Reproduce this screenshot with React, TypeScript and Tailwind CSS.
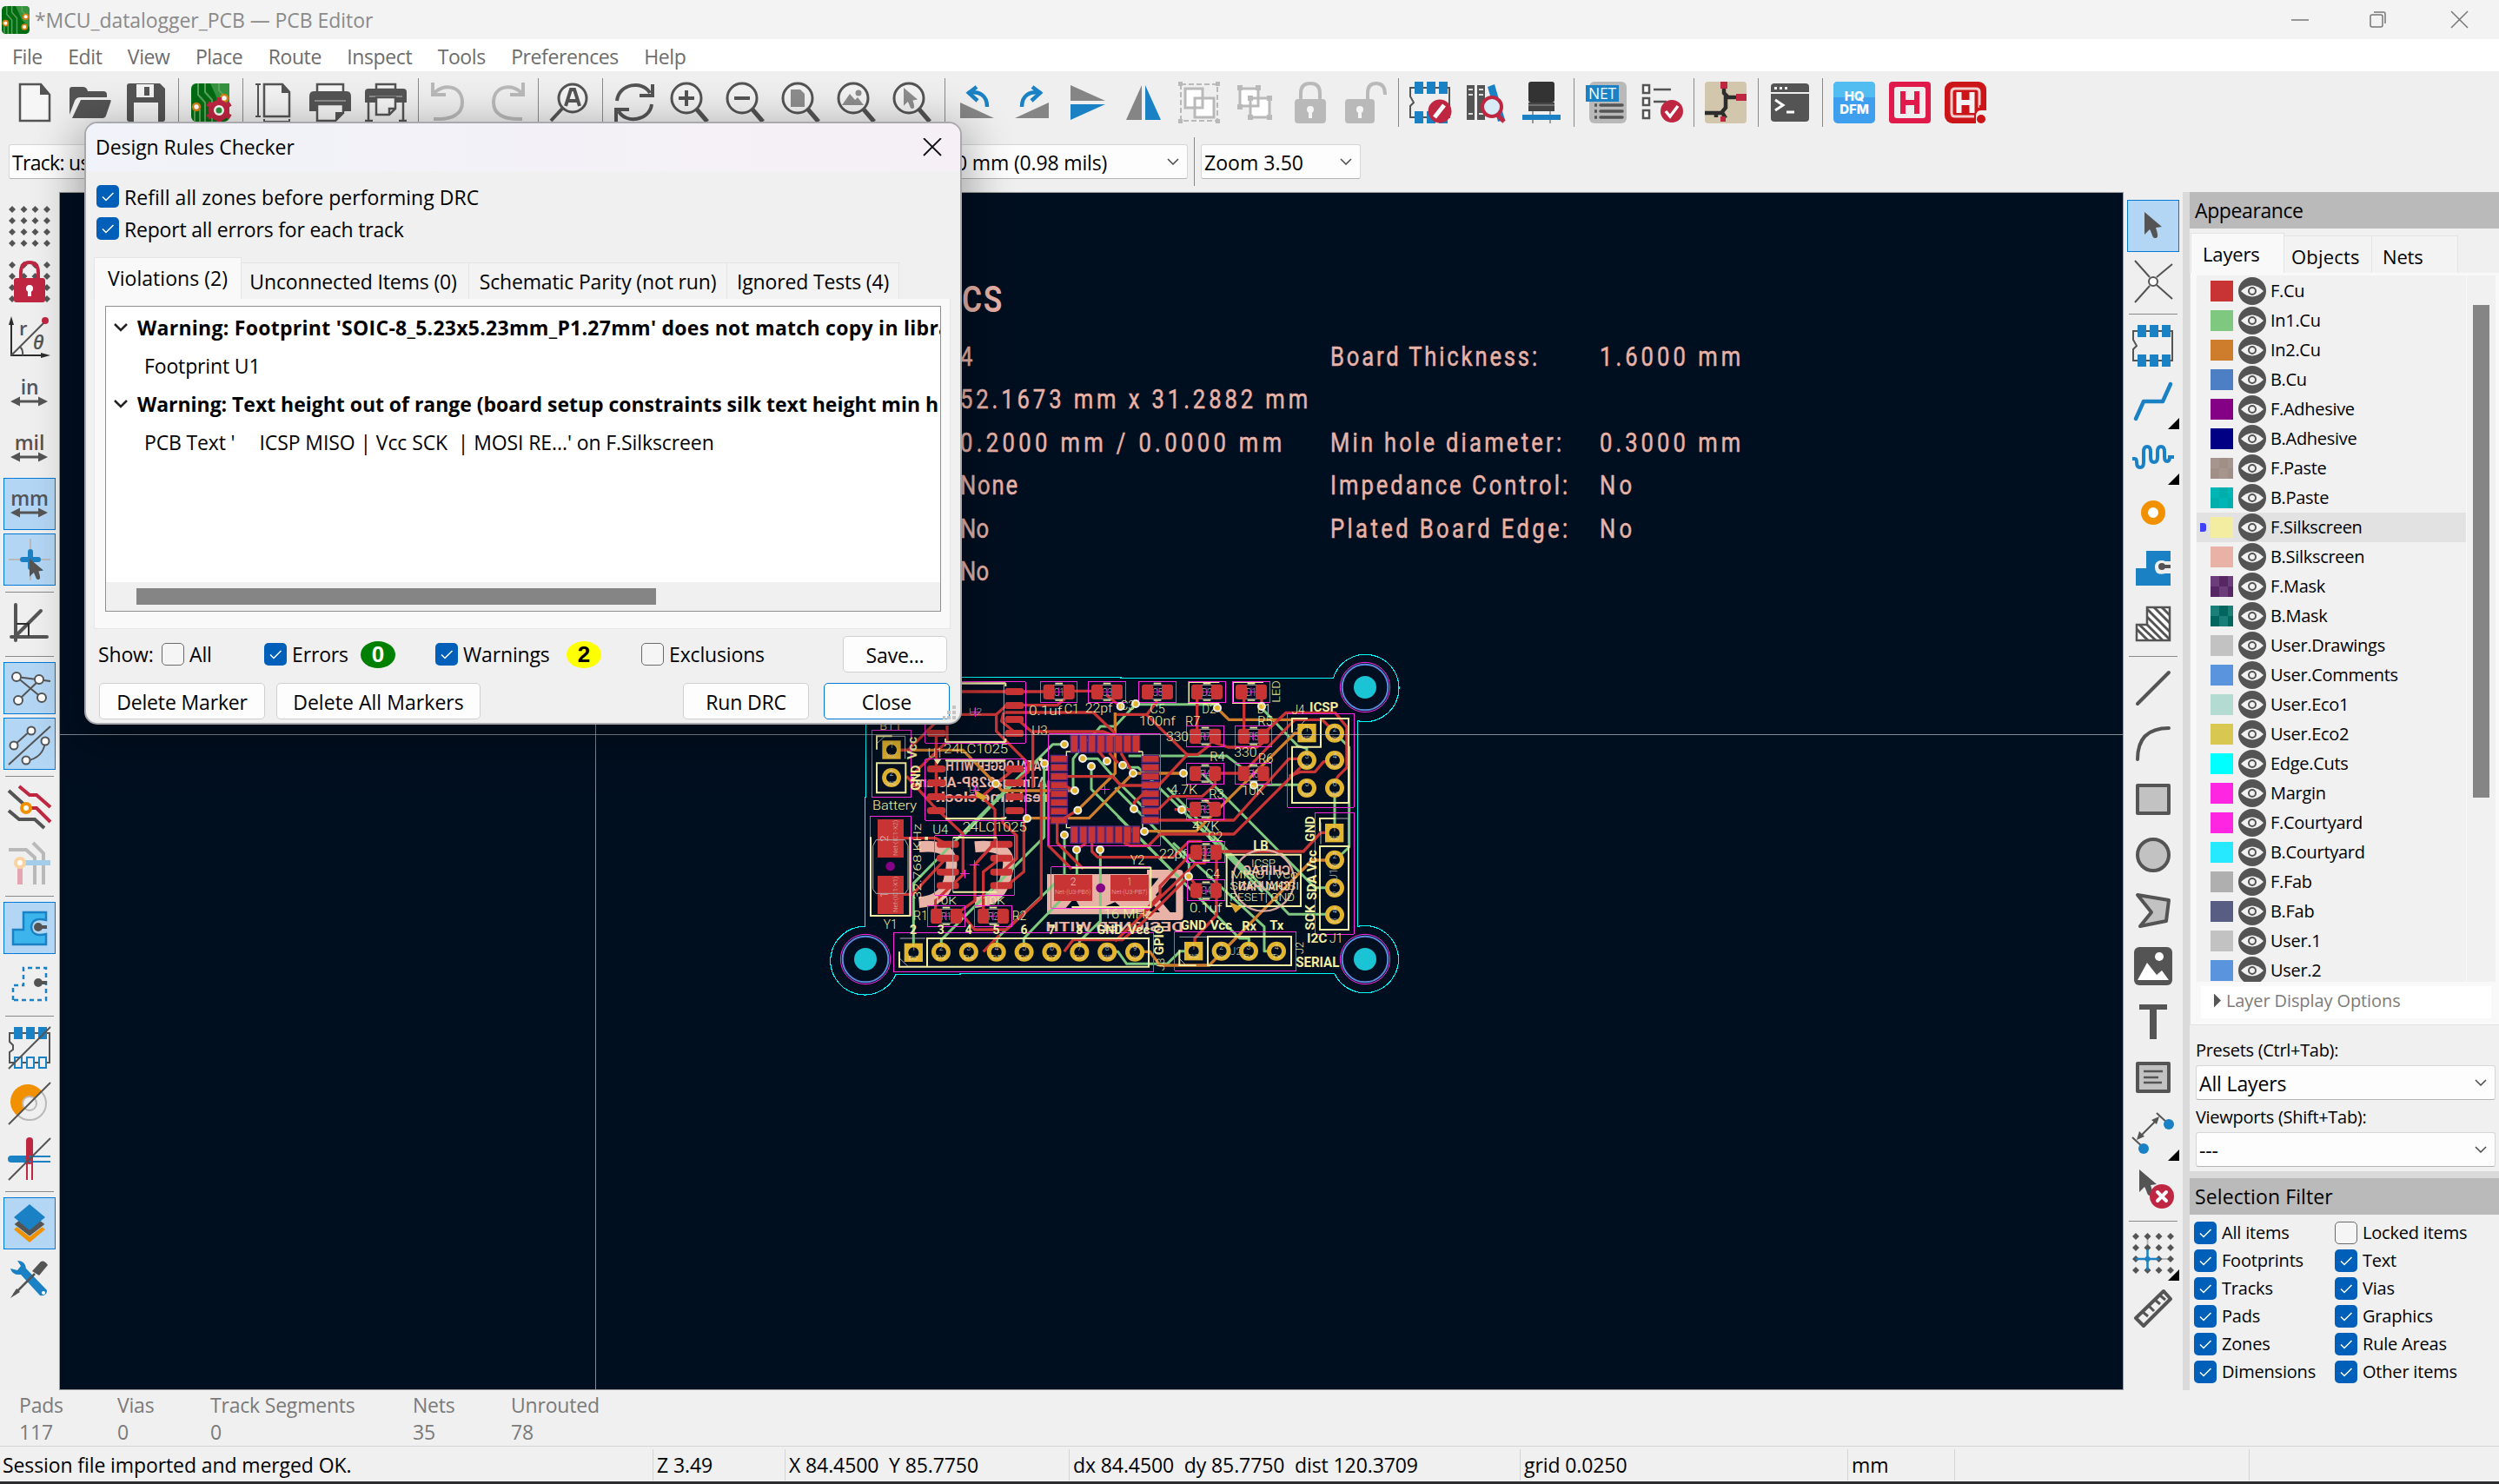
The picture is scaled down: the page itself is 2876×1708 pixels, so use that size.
import type { ReactNode } from "react";
import clsx from "clsx";

const D = "#545454";
const B = "#1a81c4";
const R = "#bf2641";
const G = "#b9b9b9";
const O = "#f29100";

/* ---------- icons, all on a 48 x 48 grid ---------- */

const lens = (
  <>
    <circle cx="27" cy="19" r="16" fill="#f5f5f5" stroke={D} strokeWidth="3" />
    <path d="M15 31 L2 45" stroke={D} strokeWidth="4" />
  </>
);
const lensR = (
  <>
    <circle cx="20" cy="19" r="17" fill="#f3f3f3" stroke={D} strokeWidth="3" />
    <path d="M32 32 L44 46" stroke={D} strokeWidth="5" />
  </>
);
const arrowPair = (
  <path d="M2 34 L13 28.500 V32.500 H34 V28.500 L45 34 L34 39.500 V35.500 H13 V39.500 Z" fill={D} />
);
const dots = [5, 18, 31, 44].map((y) =>
  [4, 17.5, 30.5, 44].map((x) => <path key={`${x}-${y}`} d={`M${x} ${y - 4} l4 4 l-4 4 l-4 -4 Z`} fill={D} />),
);
const tick = (
  <>
    <circle cx="36" cy="34" r="13" fill={R} />
    <path d="M29 34 L34 40 L43 28" fill="none" stroke="#fff" strokeWidth="3.500" />
  </>
);
const boardArt = (
  <>
    <rect x="2" y="2" width="44" height="44" rx="6" fill="#006c12" />
    <path d="M24 2 H46 V36 L34 24 Z" fill="#37933f" />
    <path
      d="M10 2 V15 L18 24 V46 M18 2 V12 L26 21 V46 M34 2 V10 L42 18 M6 34 V46 M12 32 V46"
      fill="none"
      stroke="#5aa35e"
      strokeWidth="2"
    />
    <circle cx="8" cy="29" r="4" fill="#fff" stroke="#d98014" strokeWidth="2.500" />
    <circle cx="40" cy="19" r="4" fill="#fff" stroke="#d98014" strokeWidth="2.500" />
    <circle cx="38" cy="35" r="4" fill="#fff" stroke="#d98014" strokeWidth="2.500" />
  </>
);
const undoArrow = (
  <path d="M4 1 V15 H19 M5 14 C14 2 38 3 38 24 C38 37 27 44 5 43" fill="none" stroke={G} strokeWidth="4" />
);
const rotateArrow = (
  <>
    <path d="M5 24 L44 42 H5 Z" fill="#858585" />
    <path d="M14 13 C27 10 36 16 36 29" fill="none" stroke={B} strokeWidth="4.500" />
    <path d="M24 6 L15 13 L25 22" fill="none" stroke={B} strokeWidth="4.500" />
  </>
);
const cursor = "M0 0 L0 26 L6 20 C9 25 9 30 12 30 C16 30 16 27 13 18 L20 17 Z";
const footprint = (
  <>
    <path d="M8 7 H46 V41 H1 V28 L5 24 L1 17 V7 Z" fill="none" stroke={D} strokeWidth="2" />
    <path d="M6 0 h10 v14 h-10 Z M20 0 h10 v14 h-10 Z M34 0 h10 v14 h-10 Z M6 34 h10 v14 h-10 Z M20 34 h10 v14 h-10 Z M34 34 h10 v14 h-10 Z" fill={B} />
  </>
);

const icons: Record<string, ReactNode> = {
  file: (
    <>
      <path d="M7 3 H31 L41 15 V45 H7 Z" fill="#f6f6f6" stroke={D} strokeWidth="2.500" />
      <path d="M30 2 L42 15 H30 Z" fill={D} />
    </>
  ),
  open: (
    <>
      <path d="M0 38 V9 Q0 6 3 6 H15 Q20 6 21 11 H39 Q43 11 43 15 V18 H12 Q8 18 6 22 Z" fill={D} />
      <path d="M13 21 H47 Q48 21 47.500 23 L42 39 Q41 42 38 42 H3 Z" fill={D} />
    </>
  ),
  save: (
    <>
      <path d="M5 2 H40 L46 8 V43 Q46 46 43 46 H5 Q2 46 2 43 V5 Q2 2 5 2 Z" fill={D} />
      <path d="M13 3 H33 V18 H13 Z M10 24 H38 V46 H10 Z" fill="#f3f3f3" />
      <path d="M22 6 H28 V16 H22 Z" fill={D} />
    </>
  ),
  board: (
    <>
      {boardArt}
      <circle cx="34" cy="33" r="9" fill="#fff" stroke={R} strokeWidth="6" />
      <path d="M34 18 V24 M34 42 V48 M21 25 L27 29 M41 37 L47 41 M21 41 L27 37 M41 29 L47 25" stroke={R} strokeWidth="6" />
      <circle cx="34" cy="33" r="3.500" fill="#2c9438" />
    </>
  ),
  page: (
    <>
      <path d="M12 3 H33 L41 12 V40 H12 Z" fill="#f3f3f3" stroke={D} strokeWidth="2.500" />
      <path d="M32 2 L42 13 H32 Z" fill={D} />
      <path d="M2 3 H8 M5 3 V41 M2 40 H8 M12 43 V48 M41 43 V48 M12 46 H41" stroke={D} strokeWidth="2" />
    </>
  ),
  print: (
    <>
      <path d="M9 3 H39 V13 H9 Z" fill="#f5f5f5" stroke={D} strokeWidth="2.500" />
      <path d="M5 11 H43 Q48 11 48 17 V34 H0 V17 Q0 11 5 11 Z" fill={D} />
      <path d="M6 22 H42" stroke="#8c8c8c" strokeWidth="2" />
      <path d="M9 26 H39 V36 L30 45 H9 Z" fill="#f5f5f5" stroke={D} strokeWidth="2.500" />
      <path d="M30 46 V35 H40 Z" fill={D} />
    </>
  ),
  plot: (
    <>
      <path d="M13 3 H35 V9 H13 Z" fill="#f5f5f5" stroke={D} strokeWidth="2.500" />
      <path d="M4 8 H44 Q48 8 48 12 V24 H0 V12 Q0 8 4 8 Z" fill={D} />
      <path d="M5 17 H43" stroke="#8c8c8c" strokeWidth="2" />
      <path d="M13 18 H35 V31 L28 38 H13 Z" fill="#f5f5f5" stroke={D} strokeWidth="2.500" />
      <path d="M4 24 V45 M44 24 V45 M0 45 H9 M39 45 H48 M28 38 V31 H35" stroke={D} strokeWidth="2.500" fill="none" />
    </>
  ),
  undo: undoArrow,
  redo: <g transform="matrix(-1 0 0 1 48 0)">{undoArrow}</g>,
  find: (
    <>
      {lens}
      <path d="M19 28 L25 9 H29 L35 28 M21 22 H33" fill="none" stroke={D} strokeWidth="4" />
    </>
  ),
  refresh: (
    <>
      <path d="M4 22 C6 2 34 -2 42 13 M44 26 C42 45 14 49 6 34" fill="none" stroke={D} strokeWidth="4" />
      <path d="M45 3 V16 H30 M3 46 V32 H18" fill="none" stroke={D} strokeWidth="4" />
    </>
  ),
  zoomIn: (
    <>
      {lensR}
      <path d="M11 19 H29 M20 10 V28" stroke={D} strokeWidth="4" />
    </>
  ),
  zoomOut: (
    <>
      {lensR}
      <path d="M11 19 H29" stroke={D} strokeWidth="4" />
    </>
  ),
  zoomPage: (
    <>
      {lensR}
      <path d="M12 9 H23 L28 14 V29 H12 Z" fill="#8d8d8d" />
    </>
  ),
  zoomObj: (
    <>
      {lensR}
      <path d="M7 27 L16 14 L22 21 L25 18 L32 27 Z" fill="#8d8d8d" />
      <circle cx="26" cy="13" r="3.500" fill="#8d8d8d" />
    </>
  ),
  zoomSel: (
    <>
      {lensR}
      <path d={cursor} transform="translate(14 7) scale(.8)" fill="#8d8d8d" />
    </>
  ),
  rotL: rotateArrow,
  rotR: <g transform="matrix(-1 0 0 1 48 0)">{rotateArrow}</g>,
  flipV: (
    <>
      <path d="M4 4 L44 22 H4 Z" fill="#858585" />
      <path d="M4 26 H44 L4 44 Z" fill={B} />
    </>
  ),
  flipH: (
    <>
      <path d="M22 4 V44 H4 Z" fill="#858585" />
      <path d="M26 4 V44 H44 Z" fill={B} />
    </>
  ),
  group: (
    <>
      <rect x="3" y="3" width="42" height="42" fill="none" stroke={G} strokeWidth="2" strokeDasharray="6 3" />
      <path d="M8 8 H28 V30 H8 Z M19 19 H41 V41 H19 Z" fill="#fff" stroke={G} strokeWidth="3" />
      <path d="M0 0 h5 v5 h-5 Z M43 0 h5 v5 h-5 Z M0 43 h5 v5 h-5 Z M43 43 h5 v5 h-5 Z" fill={G} />
    </>
  ),
  ungroup: (
    <>
      <path d="M7 8 H28 V28 H7 Z M19 19 H41 V41 H19 Z" fill="#fff" stroke={G} strokeWidth="3" />
      <path d="M4 4 h6 v6 h-6 Z M25 4 h6 v6 h-6 Z M4 26 h6 v6 h-6 Z M16 16 h6 v6 h-6 Z M38 16 h6 v6 h-6 Z M16 38 h6 v6 h-6 Z M38 38 h6 v6 h-6 Z" fill={G} />
    </>
  ),
  lock: (
    <>
      <path d="M13 22 V13 Q13 2 24 2 Q35 2 35 13 V22" fill="none" stroke={G} strokeWidth="4" />
      <rect x="6" y="20" width="36" height="28" rx="4" fill={G} />
      <circle cx="24" cy="32" r="4" fill="#f5f5f5" />
      <path d="M22 33 h4 v9 h-4 Z" fill="#f5f5f5" />
    </>
  ),
  unlock: (
    <>
      <path d="M26 22 V13 Q26 2 36 2 Q46 2 46 15" fill="none" stroke={G} strokeWidth="4" />
      <rect x="0" y="20" width="34" height="28" rx="4" fill={G} />
      <circle cx="17" cy="32" r="4" fill="#f5f5f5" />
      <path d="M15 33 h4 v9 h-4 Z" fill="#f5f5f5" />
    </>
  ),
  fpEdit: (
    <>
      {footprint}
      <path d="M14 15 H34 V33 H14 Z" fill="#efefef" />
      <circle cx="35" cy="34" r="13.500" fill={R} />
      <path d="M29 41 L40 27" stroke="#fff" strokeWidth="5" />
    </>
  ),
  fpLib: (
    <>
      <path d="M2 4 H11 V44 H2 Z M14 4 H23 V44 H14 Z" fill={D} />
      <path d="M26 6 L34 3 L46 44 L38 46 Z" fill={B} />
      <path d="M4 9 h5 M4 15 h5 M16 9 h5 M16 15 h5 M4 37 h5 M16 37 h5" stroke="#ddd" strokeWidth="2" />
      <circle cx="31" cy="29" r="11" fill="#d8ecf8" stroke={R} strokeWidth="4" />
      <path d="M37 38 L45 46" stroke={R} strokeWidth="5" />
    </>
  ),
  footprintChip: (
    <>
      <rect x="9" y="0" width="30" height="24" rx="3" fill="#333" />
      <path d="M9 24 H39 V34 H9 Z" fill="#444" />
      <path d="M9 27 H39" stroke="#6f6f6f" strokeWidth="2" />
      <path d="M14 34 V48 M34 34 V48" stroke="#999" strokeWidth="2" />
      <rect x="2" y="38" width="44" height="6" fill={B} />
    </>
  ),
  net: (
    <>
      <rect x="5" y="0" width="43" height="48" rx="6" fill={G} />
      <rect x="1" y="4" width="38" height="19" fill={B} />
      <text x="20" y="20" textAnchor="middle" fontFamily="Open Sans" fontSize="17.500" fill="#fff">
        NET
      </text>
      <path d="M18 27 H43 M18 34 H43 M18 41 H43" stroke={D} strokeWidth="3.500" strokeLinecap="round" />
      <path d="M11 27 h3 M11 34 h3 M11 41 h3" stroke={D} strokeWidth="3.500" />
    </>
  ),
  drc: (
    <>
      <path d="M3 4 h7 v9 h-7 Z M3 19 h7 v8 h-7 Z M3 33 h7 v9 h-7 Z" fill="#fff" stroke={D} strokeWidth="2.500" />
      <path d="M15 9 H35 M15 23 H30" stroke={D} strokeWidth="2.500" />
      {tick}
    </>
  ),
  route: (
    <>
      <rect width="48" height="48" rx="4" fill="#d2c6ac" />
      <path d="M22 0 V13 L27 18 H38 M24 16 V30 L19 36 H0 M13 34 V41 M19 34 L24 42" fill="none" stroke="#2d2d2d" strokeWidth="4.500" />
      <path d="M18 0 h8 v8 h-8 Z M36 14 h12 v8 h-12 Z M18 40 h6 v6 h-6 Z" fill={R} />
    </>
  ),
  console: (
    <>
      <rect x="2" y="2" width="44" height="44" rx="4" fill={D} />
      <path d="M2 13 H46" stroke="#efefef" strokeWidth="2" />
      <path d="M6 7.500 h3 M12 7.500 h3 M18 7.500 h3" stroke="#efefef" strokeWidth="3" />
      <path d="M7 21 L16 27 L7 33 M20 35 H29" fill="none" stroke="#fff" strokeWidth="3" />
    </>
  ),
  hq: (
    <>
      <rect width="48" height="48" rx="5" fill="#3f9fef" />
      <path d="M0 5 Q0 0 5 0 H43 Q48 0 48 5 V18 H0 Z" fill="#52bdf0" />
      <text x="24" y="22" fontFamily="Inter" fontWeight="800" fontSize="15" textAnchor="middle" fill="#fff">
        HQ
      </text>
      <text x="24" y="37" fontFamily="Inter" fontWeight="800" fontSize="15" textAnchor="middle" fill="#fff">
        DFM
      </text>
    </>
  ),
  h1: (
    <>
      <rect width="48" height="48" rx="4" fill="#e01b4c" />
      <rect x="6" y="6" width="36" height="36" rx="3" fill="#eee" />
      <path d="M16 11 V37 M32 11 V37 M16 24 H32" stroke="#e01b4c" strokeWidth="6" />
    </>
  ),
  h2: (
    <>
      <rect width="48" height="48" rx="9" fill="#cc1519" />
      <path d="M40 30 V12 Q40 8 36 8 H12 Q8 8 8 12 V36 Q8 40 12 40 H34" fill="none" stroke="#f0d0d0" strokeWidth="3" />
      <path d="M16.500 12 V36 M31.500 12 V36 M16 24 H32" stroke="#f4f4f4" strokeWidth="6" />
      <path d="M36 40 Q36 33 42 33 H48 V48 H36 Z" fill="#efefef" />
      <circle cx="42" cy="43" r="5" fill="#cc1519" />
      <path d="M40 30 H46" stroke="#cc1519" strokeWidth="6" />
    </>
  ),
  grid: <g>{dots}</g>,
  gridLock: (
    <>
      {dots}
      <path d="M14 20 V14 Q14 2 24 2 Q34 2 34 14 V20" fill="none" stroke={R} strokeWidth="4" />
      <rect x="6" y="20" width="36" height="28" rx="3" fill={R} />
      <circle cx="24" cy="32" r="4" fill="#fff" />
      <path d="M22 33 h4 v8 h-4 Z" fill="#fff" />
    </>
  ),
  polar: (
    <>
      <path d="M3 8 V45 H40" fill="none" stroke="#2c2c2c" strokeWidth="2" />
      <path d="M3 0 L6 10 H0 Z M48 45 L37 42 V48 Z" fill="#2c2c2c" />
      <path d="M3 45 L42 6 M13 35 Q17 39 16 45" fill="none" stroke={D} strokeWidth="2" />
      <circle cx="42" cy="5" r="4" fill={R} />
      <text x="12" y="22" fontFamily="Open Sans" fontWeight="600" fontSize="22" fill={D}>
        r
      </text>
      <text x="28" y="38" fontFamily="Open Sans" fontStyle="italic" fontWeight="600" fontSize="22" fill={D}>
        θ
      </text>
    </>
  ),
  in: (
    <>
      <text x="24" y="26" textAnchor="middle" fontFamily="Open Sans" fontWeight="600" fontSize="23" fill={D}>
        in
      </text>
      {arrowPair}
    </>
  ),
  mil: (
    <>
      <text x="24" y="26" textAnchor="middle" fontFamily="Open Sans" fontWeight="600" fontSize="23" fill={D}>
        mil
      </text>
      {arrowPair}
    </>
  ),
  mm: (
    <>
      <text x="24" y="26" textAnchor="middle" fontFamily="Open Sans" fontWeight="600" fontSize="23" fill={D}>
        mm
      </text>
      {arrowPair}
    </>
  ),
  cross: (
    <>
      <path d="M25 0 V48 M0 24 H48" stroke={G} strokeWidth="2" />
      <path d="M25 15 V33 M16 24 H34" stroke={B} strokeWidth="6" strokeLinecap="round" />
      <path d={cursor} transform="translate(24 23) scale(.8)" fill={D} />
    </>
  ),
  angle: (
    <>
      <path d="M8 2 V43 M3 39 H44 M8 38 L37 9" stroke={D} strokeWidth="4" strokeLinecap="round" />
      <path d="M9 24 H23 V38" fill="none" stroke="#2c2c2c" strokeWidth="2" />
    </>
  ),
  rats: (
    <>
      <path d="M9 11 L48 16 M9 11 L38 35 M11 38 L36 14" stroke={D} strokeWidth="2" />
      {[[9, 11], [35, 14], [38, 35], [11, 38]].map(([x, y]) => (
        <circle key={x} cx={x} cy={y} r="5" fill="#fff" stroke={D} strokeWidth="2" />
      ))}
    </>
  ),
  curved: (
    <>
      <path d="M0 48 L48 4 M6 26 L26 8 M20 44 Q40 40 42 22" fill="none" stroke={D} strokeWidth="2" />
      {[[6, 26], [26, 9], [42, 21], [20, 43]].map(([x, y]) => (
        <circle key={x} cx={x} cy={y} r="4.500" fill="#fff" stroke={D} strokeWidth="2" />
      ))}
    </>
  ),
  tracks1: (
    <>
      <path d="M12 -1 L24 9 H32 L48 23 M20 24 H32 L48 40" fill="none" stroke={R} strokeWidth="4" />
      <path d="M0 4 L20 22 M0 27 L12 37 H30 L41 47" fill="none" stroke={D} strokeWidth="4" />
      <circle cx="20" cy="24" r="5" fill="#fff" stroke={O} strokeWidth="4" />
    </>
  ),
  tracks2: (
    <>
      <path d="M0 8 H20 L30 17 V48 M28 0 L40 12 V48" fill="none" stroke={G} strokeWidth="4" />
      <path d="M13 24 V48" stroke="#e5a6b3" strokeWidth="6" />
      <path d="M18 23 H48" stroke="#a3cde8" strokeWidth="6" />
      <circle cx="13" cy="23" r="5" fill="#fff" stroke="#f9d3a0" strokeWidth="4" />
    </>
  ),
  zoneFill: (
    <>
      <path d="M5 43 V26 H17 V6 H43 V15 Q27 11 26 23 Q27 35 43 31 V43 Z" fill="#3cb4ec" stroke={B} strokeWidth="2.500" />
      <circle cx="34" cy="23" r="5" fill={D} />
      <path d="M34 23 H44" stroke={D} strokeWidth="4" />
    </>
  ),
  zoneLine: (
    <>
      <path d="M5 43 V26 H17 V6 H43 V43 Z" fill="none" stroke={B} strokeWidth="2.500" strokeDasharray="5 4" />
      <circle cx="34" cy="23" r="5" fill={D} />
      <path d="M34 23 H44" stroke={D} strokeWidth="4" />
    </>
  ),
  padSketch: (
    <>
      <path d="M8 7 H47 V41 H1 V29 L5 26 V21 L1 17 V7 Z" fill="none" stroke={D} strokeWidth="2" />
      <path d="M6 0 h10 v14 h-10 Z M20 0 h10 v14 h-10 Z M34 0 h10 v14 h-10 Z" fill={B} />
      <path d="M7 35 h8 v12 h-8 Z M21 35 h8 v12 h-8 Z M35 35 h8 v12 h-8 Z" fill="#efefef" stroke={B} strokeWidth="2" />
      <path d="M0 48 L48 0" stroke={D} strokeWidth="2" />
    </>
  ),
  viaSketch: (
    <>
      <circle cx="24" cy="24" r="19" fill="none" stroke={G} strokeWidth="2" />
      <path d="M10 38 A20 20 0 1 1 38 10 Z" fill={O} />
      <circle cx="24" cy="24" r="8" fill="#efefef" stroke={G} strokeWidth="2" />
      <path d="M0 48 L48 0" stroke={D} strokeWidth="2" />
    </>
  ),
  trackSketch: (
    <>
      <path d="M3 24 H20" stroke={B} strokeWidth="8" strokeLinecap="round" />
      <path d="M24 3 V26" stroke={R} strokeWidth="8" strokeLinecap="round" />
      <path d="M24 21 H48 M24 27 H48" stroke={B} strokeWidth="2" />
      <path d="M21 24 V48 M27 24 V48" stroke={R} strokeWidth="2" />
      <path d="M0 48 L48 0" stroke={D} strokeWidth="2" />
    </>
  ),
  layers: (
    <>
      <path d="M24 17 L42 31 L24 46 L6 31 Z" fill={O} />
      <path d="M24 11 L42 25 L24 39 L6 25 Z" fill={D} stroke="#b1d5f4" strokeWidth="1" />
      <path d="M24 2 L42 17 L24 32 L6 17 Z" fill={B} />
    </>
  ),
  tools: (
    <>
      <path d="M10 3 Q19 3 20 12 L44 37 Q44 44 36 43 L14 19 Q4 20 2 12 L10 14 L14 9 Z" fill={B} />
      <circle cx="40" cy="40" r="2" fill="#fff" />
      <path d="M6 42 L30 18" stroke={D} strokeWidth="2.500" />
      <path d="M27 15 L37 4 Q41 2 45 8 L35 20 Z" fill={D} />
      <path d="M2 46 L9 35 L13 39 Z" fill={D} />
    </>
  ),
  select: <path d={cursor} transform="translate(14 8)" fill={D} />,
  ratLocal: (
    <>
      <path d="M3 0 L20 19 M46 4 L28 19 M28 28 L46 44 M20 29 L3 48" stroke={D} strokeWidth="2" />
      <circle cx="24" cy="24" r="5" fill="#fff" stroke={D} strokeWidth="2" />
    </>
  ),
  placeFp: footprint,
  trackTool: <path d="M4 44 L13 24 H35 L44 4" fill="none" stroke={B} strokeWidth="4.500" strokeLinejoin="round" strokeLinecap="round" />,
  tune: (
    <path
      d="M0 26 H3 Q5 26 5 30 Q5 36 9 36 Q13 36 13 30 V18 Q13 12 17 12 Q21 12 21 18 V24 Q21 30 25 30 Q29 30 29 24 V18 Q29 12 33 12 Q37 12 37 18 V24 Q37 29 40 29 Q43 29 43 24 H48"
      fill="none"
      stroke={B}
      strokeWidth="4"
    />
  ),
  via: <circle cx="24" cy="24" r="10" fill="#fff" stroke={O} strokeWidth="8" />,
  zoneAdd: (
    <>
      <path d="M4 44 V24 H16 V4 H44 V16 H38 Q26 13 26 23 Q26 33 38 30 H44 V44 Z" fill={B} />
      <circle cx="34" cy="22" r="7" fill="#efefef" />
      <circle cx="34" cy="22" r="4" fill={D} />
      <path d="M34 22 H44" stroke={D} strokeWidth="4" />
    </>
  ),
  ruleArea: (
    <>
      <path d="M5 43 V25 H17 V5 H43 V43 Z" fill="#fff" stroke={D} strokeWidth="2.500" />
      <path d="M5 30 L18 43 M8 25 L27 43 M17 25 L35 43 M17 16 L43 42 M17 7 L43 33 M25 5 L43 23 M34 5 L43 14" stroke={D} strokeWidth="3" />
    </>
  ),
  line: <path d="M6 42 L42 6" stroke={D} strokeWidth="4" strokeLinecap="round" />,
  arc: <path d="M6 42 Q6 6 42 6" fill="none" stroke={D} strokeWidth="4" strokeLinecap="round" />,
  rect: <rect x="6" y="8" width="36" height="32" fill="#c2c2c2" stroke={D} strokeWidth="4" strokeLinejoin="round" />,
  circle: <circle cx="24" cy="24" r="18" fill="#c2c2c2" stroke={D} strokeWidth="4" />,
  poly: <path d="M6 6 L42 12 L39 36 L9 42 L22 26 Z" fill="#c2c2c2" stroke={D} strokeWidth="4" strokeLinejoin="round" />,
  image: (
    <>
      <rect x="2" y="2" width="44" height="44" rx="6" fill={D} />
      <path d="M6 40 L17 20 L28 34 L34 29 L42 40 Z" fill="#fff" />
      <circle cx="31" cy="13" r="5" fill="#fff" />
    </>
  ),
  text: <path d="M8 4 H40 V10 H28 V44 H20 V10 H8 Z" fill={D} />,
  textbox: (
    <>
      <rect x="6" y="8" width="36" height="32" fill="#c2c2c2" stroke={D} strokeWidth="4" strokeLinejoin="round" />
      <path d="M13 17 H35 M13 24 H30 M13 30 H34" stroke={D} strokeWidth="2.500" />
    </>
  ),
  dimension: (
    <>
      <path d="M28 1 L42 14 M0 29 L14 42 M8 29 L29 8" stroke={D} strokeWidth="2" />
      <path d="M31 5 L28 14 L22 9 Z M5 32 L8 22 L14 28 Z" fill={D} />
      <circle cx="42" cy="14" r="6" fill={B} />
      <circle cx="13" cy="42" r="6" fill={B} />
    </>
  ),
  deleteTool: (
    <>
      <path d={cursor} transform="translate(8 2)" fill={D} />
      <circle cx="34" cy="33" r="14" fill={R} />
      <path d="M29 28 L39 38 M39 28 L29 38" stroke="#fff" strokeWidth="4" strokeLinecap="round" />
    </>
  ),
  origin: (
    <>
      <path d="M17.500 2 V18 M31 31 H44" stroke={G} strokeWidth="2" />
      {dots}
      <path d="M17.500 20 V44 M4 31 H31" stroke={B} strokeWidth="2.500" />
      <circle cx="17.500" cy="31" r="3" fill={B} />
    </>
  ),
  measure: (
    <>
      <path d="M4 35 L36 4 L44 13 L13 44 Z" fill="none" stroke={D} strokeWidth="4" strokeLinejoin="round" />
      <path d="M12 28 L18 33 M19 21 L25 27 M26 14 L32 19 M32 9 L38 14" stroke={D} strokeWidth="3" />
    </>
  ),
};

type Tool = string | null | { n: string; on?: boolean; more?: boolean };

function Glyph({ name }: { name: string }) {
  return (
    <svg viewBox="0 0 48 48" className="size-12 shrink-0 overflow-visible">
      {icons[name]}
    </svg>
  );
}

function VToolbar({ tools, className }: { tools: Tool[]; className: string }) {
  return (
    <div className={clsx("flex shrink-0 flex-col items-center bg-[#efefef] pt-[7px]", className)}>
      {tools.map((t, i) => {
        if (t === null)
          return (
            <div key={i} className="flex h-2.5 w-14 shrink-0 items-center">
              <div className="h-px w-full bg-[#8a8a8a]" />
            </div>
          );
        const o = typeof t === "string" ? { n: t } : t;
        return (
          <div key={i} className="flex h-16 w-16 shrink-0 items-center justify-center">
            <div
              className={clsx(
                "relative flex size-[60px] items-center justify-center",
                o.on && "border border-[#0078d4] bg-[#b3d6f4]",
              )}
            >
              <Glyph name={o.n} />
              {o.more && (
                <div className="absolute right-0 -bottom-0.5 size-[13px] bg-black [clip-path:polygon(100%_0,100%_100%,0_100%)]" />
              )}
            </div>
          </div>
        );
      })}
    </div>
  );
}

const leftTools: Tool[] = [
  "grid", "gridLock", "polar", "in", "mil", { n: "mm", on: true }, { n: "cross", on: true }, null,
  "angle", null, { n: "rats", on: true }, { n: "curved", on: true }, null, "tracks1", "tracks2", null,
  { n: "zoneFill", on: true }, "zoneLine", null, "padSketch", "viaSketch", "trackSketch", null,
  { n: "layers", on: true }, "tools",
];
const rightTools: Tool[] = [
  { n: "select", on: true }, "ratLocal", null, "placeFp", { n: "trackTool", more: true }, { n: "tune", more: true },
  "via", "zoneAdd", "ruleArea", null, "line", "arc", "rect", "circle", "poly", "image", "text", "textbox",
  { n: "dimension", more: true }, "deleteTool", null, { n: "origin", more: true }, "measure",
];
const topTools: (string | null)[] = [
  "file", "open", "save", null, "board", null, "page", "print", "plot", null, "undo", "redo", null, "find", null,
  "refresh", "zoomIn", "zoomOut", "zoomPage", "zoomObj", "zoomSel", null, "rotL", "rotR", "flipV", "flipH", "group",
  "ungroup", "lock", "unlock", null, "fpEdit", "fpLib", "footprintChip", null, "net", "drc", null, "route", null,
  "console", null, "hq", "h1", "h2",
];

const layers: [string, string, string?][] = [
  ["F.Cu", "#c83434"], ["In1.Cu", "#7fc87f"], ["In2.Cu", "#ce7d2c"], ["B.Cu", "#4d7fc4"],
  ["F.Adhesive", "#840084"], ["B.Adhesive", "#000084"], ["F.Paste", "#a5958e", "#a08f87"],
  ["B.Paste", "#00b5b5", "#00aeab"], ["F.Silkscreen", "#f2eda1"], ["B.Silkscreen", "#e8b2a7"],
  ["F.Mask", "#6c3d7b", "#562763"], ["B.Mask", "#1a7f78", "#02665f"], ["User.Drawings", "#c2c2c2"],
  ["User.Comments", "#5994dc"], ["User.Eco1", "#b4dbd2"], ["User.Eco2", "#d8c852"], ["Edge.Cuts", "#00ffff"],
  ["Margin", "#ff26e2"], ["F.Courtyard", "#ff26e2"], ["B.Courtyard", "#26e9ff"], ["F.Fab", "#afafaf"],
  ["B.Fab", "#585d84"], ["User.1", "#c2c2c2"], ["User.2", "#5994dc"],
];

/* ---------- small controls ---------- */

function Check({ on }: { on?: boolean }) {
  return on ? (
    <span className="flex size-[26px] shrink-0 items-center justify-center rounded-[5px] bg-[#005fb8]">
      <svg viewBox="0 0 26 26" className="size-[26px]">
        <path d="M7 13.500 L11 17.500 L19.500 9" fill="none" stroke="#fff" strokeWidth="1.500" />
      </svg>
    </span>
  ) : (
    <span className="size-[26px] shrink-0 rounded-[5px] border-[1.500px] border-[#6a6a6a] bg-[#f5f5f5]" />
  );
}

function Chevron() {
  return (
    <svg viewBox="0 0 14 8" className="h-2 w-3.5 shrink-0">
      <path d="M1 1 L7 7 L13 1" fill="none" stroke="#4a4a4a" strokeWidth="1.500" />
    </svg>
  );
}

function Combo({ className, children }: { className: string; children: ReactNode }) {
  return (
    <div
      className={clsx(
        "flex h-10 shrink-0 items-center justify-between rounded-[3px] border border-[#d6d6d6] border-b-[#b5b5b5] bg-[#fdfdfd] pr-[9px] pl-[3px]",
        className,
      )}
    >
      <span className="pt-0.5 whitespace-pre">{children}</span>
      <Chevron />
    </div>
  );
}

function Btn({ className, children }: { className: string; children: ReactNode }) {
  return (
    <div className={clsx("flex h-[42px] shrink-0 items-center justify-center rounded-[5px] border bg-[#fdfdfd] pt-0.5", className)}>
      {children}
    </div>
  );
}

/* ---------- board drawing ---------- */

const Y = "#f2eda1";
const PINK = "#e8b2a7";
const FCU = "#c83434";
const MG = "#ff26e2";

type TP = { x: number; y: number; s: number; w: number; t: string; c?: string; b?: boolean; r?: number; m?: boolean };

function K({ x, y, s, w, t, c = Y, b, r, m }: TP) {
  const tf = r ? `translate(${x} ${y}) rotate(${r})` : m ? `translate(${x + w} ${y}) scale(-1 1)` : `translate(${x} ${y})`;
  return (
    <text
      transform={tf}
      fontFamily="Roboto, sans-serif"
      fontWeight={b ? 700 : 300}
      fontSize={s / 0.711}
      textLength={w}
      lengthAdjust="spacingAndGlyphs"
      fill={c}
    >
      {t}
    </text>
  );
}

function Hole({ x, y }: { x: number; y: number }) {
  return (
    <>
      <circle cx={x} cy={y} r="86" fill="none" stroke={MG} strokeWidth="3" />
      <circle cx={x} cy={y} r="79" fill="none" stroke="#5a8de0" strokeWidth="6" />
      <circle cx={x} cy={y} r="39" fill="#1ac4d4" />
    </>
  );
}

function Via({ p }: { p: [number, number][] }) {
  return (
    <>
      {p.map(([x, y], i) => (
        <circle key={i} cx={x} cy={y} r="12" fill="#e3b52e" stroke="#ededed" strokeWidth="6" />
      ))}
    </>
  );
}

function Th({ x, y, n, l, sq }: { x: number; y: number; n: string; l: string; sq?: boolean }) {
  return (
    <>
      {sq ? (
        <rect x={x - 32} y={y - 32} width="64" height="64" fill="#e3b52e" />
      ) : (
        <circle cx={x} cy={y} r="33" fill="#e3b52e" />
      )}
      <circle cx={x} cy={y} r="18" fill="#000f20" />
      <K x={x - 7} y={y - 6} s={18} w={14} t={n} c="#d8d8d8" />
      <K x={x - 17} y={y + 26} s={14} w={34} t={l} c="#e8dcb0" />
    </>
  );
}

/* two-pad chip component centred at x, y */
function Chip({ x, y, t }: { x: number; y: number; t: string }) {
  return (
    <>
      <rect x={x - 20} y={y - 24} width="40" height="48" fill="none" stroke="#afafaf" strokeWidth="2.500" />
      <K x={x - 18} y={y + 13} s={26} w={36} t={t} c="#afafaf" />
      <rect x={x - 54} y={y - 26} width="39" height="52" rx="10" fill={FCU} />
      <rect x={x + 15} y={y - 26} width="39" height="52" rx="10" fill={FCU} />
      <path d={`M${x - 13} ${y - 29} h26 M${x - 13} ${y + 29} h26`} stroke={Y} strokeWidth="5" />
      <path d={`M${x - 15} ${y} h30 M${x} ${y - 15} v30`} stroke={MG} strokeWidth="2.500" />
      <rect x={x - 64} y={y - 36} width="128" height="72" fill="none" stroke={MG} strokeWidth="3" shapeRendering="crispEdges" />
    </>
  );
}

function Soic({ xl, xr, ys, w = 64 }: { xl: number; xr: number; ys: number[]; w?: number }) {
  return (
    <>
      {ys.map((y) => (
        <g key={y} fill={FCU}>
          <rect x={xl} y={y - 12} width={w} height="24" rx="10" />
          <rect x={xr} y={y - 12} width={w} height="24" rx="10" />
        </g>
      ))}
    </>
  );
}

function Board() {
  return (
    <g transform="translate(950 740) scale(.33333)">
      {/* back silkscreen */}
      <K m x={415} y={442} s={34} w={355} t="DATALOGGER WITH" c={PINK} b />
      <K m x={295} y={498} s={34} w={470} t="ATmega328P-AU and" c={PINK} b />
      <K m x={382} y={550} s={34} w={385} t="real time clock" c={PINK} b />
      <K m x={760} y={996} s={30} w={476} t="DESIGNED WITH" c={PINK} b />
      <path d="M323 704 Q460 690 430 800 Q420 890 323 896 M516 704 Q660 690 625 800 Q610 890 516 896" fill="none" stroke={PINK} strokeWidth="38" />
      <path
        d="M765 798 H1110 V783 H1222 Q1235 783 1235 796 V944 Q1235 957 1222 957 H1115 L1090 930 L1060 937 H765 Z M1190 812 L1140 870 L1190 930 H1210 V812 Z M1120 812 V850 L1150 812 Z M1120 890 V930 H1155 Z"
        fill={PINK}
        fillRule="evenodd"
      />
      <path d="M830 915 L860 880 L880 915 Z M960 912 L1000 895 L1020 912 Z" fill="#000f20" />

      {/* inner layer 1 */}
      <g fill="none" stroke="#7fc87f" strokeWidth="9" strokeLinejoin="round">
        <path d="M304 1040 V830 L590 540 L700 430 M755 420 V670 L440 985 L400 1025 V1040 M825 350 H785 L590 545 L480 660 M825 664 V800 L592 1020 V1050 M868 714 V830 L685 1020 V1050 M949 714 V960 L877 1030 V1050" />
        <path d="M1070 212 L1000 288 H950 L905 340 M888 400 H940 L1010 480 L1120 590 M918 425 V505 L1250 840 M855 510 V400 L900 340 M1070 212 H1350 M972 1066 H1010 L1040 1108 H1180 L1225 1064 H1250 M1046 390 H1385 L1450 440 M1480 490 H1640" />
        <path d="M1506 225 L1630 355 L1662 365 V400 M1758 530 V640 M1758 310 L1808 360 V705 L1760 750 M1300 450 L1690 845 H1740 M1180 500 L1600 937 H1740 M1040 430 H1080 L1462 800 M1010 600 L1430 1020 H1462 V1050 M1200 690 L1515 980 V1064 H1550 M1230 575 L1510 860 M1255 806 V760 L1000 500" />
      </g>

      {/* inner layer 2 */}
      <g fill="none" stroke="#ce7d2c" strokeWidth="10">
        <path d="M260 370 H475 L610 510 H860 M696 605 H910 L1062 450 H1236 M870 578 L1000 450 V240 M1352 225 L1393 265 H1640 M1101 650 H1280 L1620 312 H1660 M1068 1066 H1120 L1155 1113 H1325 L1680 750 H1760" />
      </g>

      {/* QFP pads */}
      <g fill={FCU} stroke="#562a80" strokeWidth="4">
        {[846, 877, 907, 938, 968, 999, 1029, 1059].map((x) => (
          <g key={x}>
            <rect x={x} y="318" width="26" height="60" />
            <rect x={x} y="633" width="26" height="58" />
          </g>
        ))}
        {[388, 418, 449, 479, 509, 539, 569, 600].map((y) => (
          <g key={y}>
            <rect x="778" y={y} width="57" height="24" />
            <rect x="1092" y={y} width="59" height="24" />
          </g>
        ))}
      </g>

      {/* front copper */}
      <g fill="none" stroke={FCU} strokeWidth="10" strokeLinejoin="round">
        <path d="M400 168 H770 M855 166 H930 M440 247 H590 L625 215 H680 M590 247 V305 L700 415 V445 L655 482 M655 215 H800 L840 180 M1020 220 L970 180 M620 240 H925 L1000 312 M615 240 L608 270 L655 310 M382 312 V430 M382 440 V530 M240 370 H285 L380 275 M300 455 L420 340 V285 M716 500 V310 L670 270" />
        <path d="M280 460 L370 560 L475 660 V800 L380 890 V930 M240 674 H380 L420 695 M270 868 H300 L420 740 M384 532 H540 L585 575 V690 L516 765 V890 L460 930 M545 930 V790 L610 740 M612 600 V620 L660 665 V745 L610 790 M685 600 V790 L630 835 M745 480 V880 L625 990 H515 L470 935 M545 1066 L600 1010 M824 1066 L855 1025 H1025 L1085 975 L1250 810" />
        <path d="M770 475 V700 L850 780 M800 610 V690 L890 780 M835 461 H990 L1020 492 H1150 L1250 385 V390 M1010 415 L980 380 M972 408 L940 370 M1062 450 L1020 380 M860 510 L820 490 M870 578 L820 608 M716 306 H960 L1000 321 M920 690 V720 L940 740 H1200 L1255 685 H1300 M868 714 L900 690 M1030 690 L1050 700 H1115 L1155 660 H1410 L1640 430 M1150 612 H1410 L1600 400 H1650 M655 432 L588 486 M540 530 L655 432" />
        <path d="M1005 247 H1110 L1145 200 M1108 247 L1248 385 H1285 L1330 350 M1283 190 V320 M1445 190 V320 M1506 218 V190 M1505 320 L1590 241 H1760 L1800 290 V430 L1770 460 L1758 480 M1355 450 H1440 M1345 345 L1390 360 H1490 L1530 330 M1450 440 L1620 265 H1715 L1750 300 M1150 575 L1195 530 H1300 L1345 490 V440 M1310 540 L1345 575 M1205 575 H1260 M1350 720 H1650 L1710 655 H1750 M1350 740 V940 L1275 1020 V1050 M1255 806 L1290 850 M1260 730 L1155 840 V870 L1085 945 M1310 700 V760 H1280 L1165 870 L1000 1030 M1600 460 L1640 445 H1690 L1720 410 H1750 M1066 573 V550 L1110 510" />
      </g>

      <Soic xl={620} xr={620} ys={[168, 216, 264, 312]} />
      <Soic xl={351} xr={351} ys={[312]} />
      <Soic xl={351} xr={621} ys={[435, 483, 531, 579]} />
      <Soic xl={384} xr={569} ys={[695, 743, 791, 838]} w={77} />
      <g fill={FCU}>
        <rect x="180" y="609" width="90" height="132" />
        <rect x="180" y="804" width="90" height="132" />
        <rect x="789" y="801" width="132" height="90" />
        <rect x="984" y="801" width="132" height="90" />
      </g>
      <g fill="#840084">
        <circle cx="224" cy="771" r="16" />
        <circle cx="950" cy="846" r="16" />
      </g>
      <K x={215} y={686} s={28} w={22} t="2" c="#e8c6c0" r={-90} />
      <K x={215} y={878} s={28} w={16} t="1" c="#e8c6c0" r={-90} />
      <K x={250} y={735} s={14} w={124} t="Net-(IC1-X2)" c="#e0b0aa" r={-90} />
      <K x={250} y={930} s={14} w={124} t="Net-(IC1-X1)" c="#e0b0aa" r={-90} />
      <K x={845} y={838} s={28} w={20} t="2" c="#e8c6c0" />
      <K x={1042} y={838} s={28} w={16} t="1" c="#e8c6c0" />
      <K x={792} y={868} s={14} w={124} t="Net-(U3-PB6)" c="#e0b0aa" />
      <K x={988} y={868} s={14} w={124} t="Net-(U3-PB7)" c="#e0b0aa" />

      {/* courtyards and body outlines */}
      <g fill="none" stroke={MG} strokeWidth="3" shapeRendering="crispEdges">
        <path d="M440 134 H691 V346 H344 V270 M344 401 H691 V613 H344 Z M377 665 H652 V871 H377 Z M160 301 H296 V532 H160 Z M154 598 H296 V942 H154 Z" />
        <path d="M770 314 H1156 V700 H770 Z M779 773 H1123 V916 H779 Z M235 1001 H1133 V1135 H235 Z M1205 997 H1625 V1132 H1205 Z M1595 244 H1825 V568 H1595 Z M1690 586 H1825 V1006 H1690 Z" />
        <path d="M502 238 h32 M518 222 v32 M502 508 h32 M518 492 v32 M499 766 h32 M515 750 v32 M465 798 h32 M481 782 v32 M948 505 h34 M965 488 v34" />
      </g>
      <g fill="none" stroke="#afafaf" strokeWidth="3">
        <path d="M420 142 H616 V340 H420 M418 410 H616 V605 H418 Z M440 674 V860 M592 674 V860 M180 345 L205 322 H275 V400 M164 700 V850 L175 865 H275 L285 850 V700 L275 680 H175 Z M257 1020 H345 M257 1090 L285 1117 H345 M1222 1015 H1320 M1222 1090 L1245 1113 M1625 300 L1655 268 M1712 606 H1805 V690 M1710 620 V695" />
      </g>
      <g fill="none" stroke={Y} strokeWidth="6">
        <path d="M440 139 H622 M414 342 H622 M622 139 V150 M414 330 V342 M622 330 V342 M414 406 H622 M414 607 H622 M622 600 V607 M440 672 H592 M440 860 H592 M177 415 H277 V517 H177 Z M177 368 V322 H230 M156 670 V942 H292 V670 M850 776 H1123 V912 H850" />
        <path d="M351 1020 H1116 V1118 H351 Z M255 1066 V1118 H351 M1320 1014 H1608 V1113 H1320 Z M1222 1060 V1113 H1280 M1611 359 H1710 V261 H1806 V552 H1611 Z M1611 310 V261 H1665 M1707 702 H1806 V990 H1707 Z M1707 650 V606 H1760 M1385 731 H1641 V909 H1385 Z M1360 135 H1254 V207 H1360 M1512 135 H1407 V207 H1512" />
        <path d="M832 390 V375 H846 M1095 375 V390 M1095 375 H1080 M832 625 V638 H846 M1095 625 V638" strokeWidth="4" />
      </g>
      <path d="M374 401 H400 L387 420 Z M343 669 h11 v11 h-11 Z M738 397 h11 v11 h-11 Z" fill={Y} />
      <path d="M516 508 L556 530 L545 545 L520 530 Z M1394 894 L1438 912 L1415 932 Z" fill="#d9a42c" />

      <Chip x={806} y={169} t="C1" />
      <Chip x={972} y={169} t="C3" />
      <Chip x={1146} y={169} t="C5" />
      <Chip x={1317} y={169} t="D2" />
      <Chip x={1470} y={169} t="D1" />
      <Chip x={1311} y={322} t="R7" />
      <Chip x={1478} y={322} t="R5" />
      <Chip x={1311} y={451} t="R4" />
      <Chip x={1478} y={451} t="R6" />
      <Chip x={1311} y={574} t="R3" />
      <Chip x={1314} y={723} t="C2" />
      <Chip x={1314} y={855} t="C4" />
      <Chip x={417} y={943} t="R1" />
      <Chip x={579} y={943} t="R2" />

      <Th sq x={228} y={369} n="1" l="Vcc" />
      <Th x={228} y={465} n="2" l="GND" />
      <Th sq x={304} y={1069} n="1" l="D2" />
      {["D3", "D4", "D5", "D6", "D7", "D8", "GND", "Vcc"].map((l, i) => (
        <Th key={l} x={399 + i * 95.6} y={1067} n={String(i + 2)} l={l} />
      ))}
      <Th sq x={1271} y={1064} n="1" l="GND" />
      <Th x={1367} y={1064} n="2" l="Vcc" />
      <Th x={1461} y={1064} n="3" l="Rx" />
      <Th x={1557} y={1064} n="4" l="Tx" />
      <Th sq x={1662} y={311} n="1" l="MISO" />
      <Th x={1758} y={311} n="2" l="Vcc" />
      <Th x={1662} y={405} n="3" l="SCK" />
      <Th x={1758} y={405} n="4" l="MOSI" />
      <Th x={1662} y={501} n="5" l="Reset" />
      <Th x={1758} y={501} n="6" l="GND" />
      <Th sq x={1757} y={656} n="1" l="GND" />
      <Th x={1758} y={749} n="2" l="Vcc" />
      <Th x={1758} y={846} n="3" l="SDA" />
      <Th x={1758} y={939} n="4" l="SCL" />

      <Via
        p={[
          [825, 350], [888, 399], [918, 426], [972, 408], [1026, 422], [1062, 450], [861, 510], [871, 578], [1065, 573],
          [756, 416], [588, 486], [696, 606], [825, 663], [867, 714], [948, 714], [1019, 219], [1071, 210], [1353, 224],
          [1506, 219], [1236, 450], [1230, 576], [1101, 651], [1254, 806], [1479, 491],
        ]}
      />

      {/* holes and board edge */}
      <Hole x={138} y={1092} />
      <Hole x={1863} y={153} />
      <Hole x={1863} y={1092} />
      <path
        d="M140 118 H1020 V122 H1753 A116 116 0 1 1 1838 269 V979 A116 116 0 1 1 1757 1141 H465 V1145 H243 A118 118 0 1 1 137 979 V532 H140 Z"
        fill="none"
        stroke="#00ffff"
        strokeWidth="3.300"
        shapeRendering="crispEdges"
      />

      {/* back silk badge */}
      <circle cx="1512" cy="820" r="106" fill="none" stroke={PINK} strokeWidth="7" opacity=".9" />
      <K m x={1440} y={800} s={32} w={165} t="CHIRAG" c={PINK} b />
      <K m x={1425} y={856} s={32} w={180} t="CHAUHAN" c={PINK} b />

      {/* front silkscreen texts */}
      <K x={187} y={300} s={28} w={75} t="BT1" />
      <K x={495} y={248} s={24} w={46} t="U2" c="#afafaf" />
      <K x={495} y={518} s={24} w={40} t="U1" c="#afafaf" />
      <K x={408} y={381} s={32} w={222} t="24LC1025" />
      <K x={353} y={395} s={32} w={52} t="U1" />
      <K x={473} y={650} s={32} w={222} t="24LC1025" />
      <K x={370} y={660} s={32} w={54} t="U4" />
      <K x={712} y={319} s={30} w={55} t="U3" />
      <K x={702} y={248} s={32} w={115} t="0.1uf" />
      <K x={824} y={242} s={32} w={52} t="C1" />
      <K x={896} y={241} s={32} w={95} t="22pf" />
      <K x={1018} y={232} s={30} w={50} t="C3" />
      <K x={162} y={575} s={32} w={153} t="Battery" />
      <K x={330} y={886} s={28} w={262} t="32.768 KHz" r={-90} />
      <K x={200} y={987} s={30} w={48} t="Y1" />
      <K x={373} y={904} s={28} w={80} t="10K" />
      <K x={540} y={904} s={28} w={80} t="10K" />
      <K x={303} y={957} s={30} w={50} t="R1" />
      <K x={644} y={957} s={30} w={50} t="R2" />
      <K x={316} y={402} s={30} w={78} t="Vcc" r={-90} b />
      <K x={326} y={510} s={30} w={88} t="GND" r={-90} b />
      {["2", "3", "4", "5", "6", "7", "8"].map((t, i) => (
        <K key={t} x={291 + i * 95.6} y={1006} s={32} w={24} t={t} b />
      ))}
      <K x={937} y={1006} s={32} w={88} t="GND" b />
      <K x={1044} y={1006} s={32} w={76} t="Vcc" b />
      <K x={960} y={950} s={30} w={168} t="16  MHz" />
      <K x={1052} y={766} s={30} w={50} t="Y2" />
      <K x={1120} y={242} s={30} w={52} t="C5" />
      <K x={1082} y={284} s={32} w={126} t="100nf" />
      <K x={1300} y={242} s={30} w={48} t="D2" />
      <K x={1490} y={242} s={30} w={48} t="D1" />
      <K x={1570} y={206} s={28} w={76} t="LED" r={-90} />
      <K x={1242} y={284} s={32} w={52} t="R7" />
      <K x={1492} y={284} s={32} w={52} t="R5" />
      <K x={1176} y={340} s={32} w={78} t="330" />
      <K x={1411} y={392} s={32} w={78} t="330" />
      <K x={1327} y={409} s={30} w={52} t="R4" />
      <K x={1494} y={413} s={30} w={52} t="R6" />
      <K x={1190} y={522} s={32} w={94} t="4.7K" />
      <K x={1437} y={524} s={30} w={78} t="10K" />
      <K x={1324} y={536} s={30} w={52} t="R3" />
      <K x={1266} y={648} s={32} w={94} t="4.7K" />
      <K x={1320} y={684} s={30} w={52} t="C2" />
      <K x={1152} y={744} s={32} w={95} t="22pf" />
      <K x={1312} y={814} s={30} w={50} t="C4" />
      <K x={1257} y={930} s={32} w={112} t="0.1uf" />
      <K x={1671} y={236} s={32} w={100} t="ICSP" b />
      <K x={1610} y={247} s={30} w={44} t="J4" />
      <K x={1477} y={716} s={34} w={52} t="LB" b />
      <K x={1470} y={774} s={28} w={84} t="ICSP" />
      <K x={1398} y={814} s={28} w={232} t="MISO |  Vcc" />
      <K x={1396} y={852} s={28} w={240} t="SCK  |  MOSI" />
      <K x={1396} y={890} s={28} w={224} t="RESET| GND" />
      <K x={1690} y={686} s={32} w={88} t="GND" r={-90} b />
      <K x={1694} y={790} s={32} w={76} t="Vcc" r={-90} b />
      <K x={1694} y={888} s={32} w={88} t="SDA" r={-90} b />
      <K x={1688} y={992} s={32} w={88} t="SCK" r={-90} b />
      <K x={1662} y={1034} s={32} w={70} t="I2C" b />
      <K x={1740} y={1034} s={30} w={46} t="J1" />
      <K x={1768} y={820} s={28} w={42} t="J1" r={-90} c="#afafaf" />
      <K x={1227} y={990} s={32} w={88} t="GND" b />
      <K x={1328} y={990} s={32} w={76} t="Vcc" b />
      <K x={1438} y={994} s={32} w={50} t="Rx" b />
      <K x={1534} y={990} s={32} w={48} t="Tx" b />
      <K x={1396} y={1076} s={28} w={42} t="J2" c="#afafaf" />
      <K x={1650} y={1074} s={28} w={42} t="J2" r={-90} />
      <K x={1168} y={1078} s={32} w={104} t="GPIO" r={-90} b />
      <K x={1170} y={1132} s={28} w={44} t="J3" r={-90} />
      <K x={1624} y={1120} s={34} w={150} t="SERIAL" b />
    </g>
  );
}

const specs: [number, number, number, string][] = [
  [1105, 421, 14, "4"],
  [1105, 470, 400, "52.1673 mm x 31.2882 mm"],
  [1105, 520, 370, "0.2000 mm / 0.0000 mm"],
  [1105, 569, 66, "None"],
  [1105, 619, 33, "No"],
  [1105, 668, 33, "No"],
  [1531, 421, 238, "Board Thickness:"],
  [1531, 520, 266, "Min hole diameter:"],
  [1531, 569, 273, "Impedance Control:"],
  [1531, 619, 273, "Plated Board Edge:"],
  [1841, 421, 162, "1.6000 mm"],
  [1841, 520, 162, "0.3000 mm"],
  [1841, 569, 37, "No"],
  [1841, 619, 37, "No"],
];

/* stroke-font look: narrow glyphs, wide gaps */
function Spec({ x, y, w, t }: { x: number; y: number; w: number; t: string }) {
  return (
    <text
      transform={`translate(${x} ${y}) scale(.84 1)`}
      fontFamily="Roboto"
      fontSize="30.500"
      textLength={w / 0.84}
      fill={PINK}
      stroke={PINK}
      strokeWidth="0.500"
    >
      {t}
    </text>
  );
}

function Canvas() {
  return (
    <svg viewBox="69 222 2374 1377" className="h-full w-full">
      <text transform="translate(1107 359) scale(.84 1)" fontFamily="Roboto" fontWeight="600" fontSize="42" textLength="55" fill={PINK}>
        CS
      </text>
      {specs.map(([x, y, w, t]) => (
        <Spec key={`${x}-${y}`} x={x} y={y} w={w} t={t} />
      ))}
      <Board />
      <path d="M69 845.500 H2443 M685.500 222 V1599" stroke="#c8ccd2" strokeOpacity=".65" strokeWidth="1" />
    </svg>
  );
}

/* ---------- DRC dialog ---------- */

function Row({ open, children }: { open?: boolean; children: ReactNode }) {
  return (
    <div className={clsx("flex h-[44px] shrink-0 items-center whitespace-pre", open ? "pl-[9px] font-bold" : "pl-11")}>
      {open && (
        <svg viewBox="0 0 16 10" className="mr-[11px] h-2.5 w-4 shrink-0">
          <path d="M1 1 L8 8 L15 1" fill="none" stroke="#222" strokeWidth="2.500" />
        </svg>
      )}
      {children}
    </div>
  );
}

function Dialog() {
  return (
    <div className="absolute top-[140px] left-[97px] flex h-[694px] w-[1010px] flex-col overflow-hidden rounded-[15px] border-2 border-[#a9a9ad] bg-[#f0f0f0] shadow-[0_14px_50px_10px_rgba(0,0,0,0.3)]">
      <div className="flex h-[55px] shrink-0 items-center justify-between bg-linear-to-r from-[#f0f3f9] to-[#f6f0f6] pr-[21px] pl-[11px]">
        <span className="tracking-[-0.05px]">Design Rules Checker</span>
        <svg viewBox="0 0 22 22" className="size-[22px]">
          <path d="M1 0 L21 20 M21 0 L1 20" stroke="#111" strokeWidth="1.800" />
        </svg>
      </div>
      <div className="mt-[16px] ml-3 flex h-[26px] shrink-0 items-center gap-[6px]">
        <Check on />
        <span className="pt-0.5 tracking-[0.05px]">Refill all zones before performing DRC</span>
      </div>
      <div className="mt-[11px] ml-3 flex h-[26px] shrink-0 items-center gap-[6px]">
        <Check on />
        <span className="pt-0.5 tracking-[-0.2px]">Report all errors for each track</span>
      </div>
      <div className="mt-[21px] ml-[9px] flex h-[47px] shrink-0 items-end">
        <div className="flex h-[48px] w-[170px] items-center justify-center border border-b-0 border-[#e4e4e4] bg-[#f9f9f9] tracking-[0.05px]">Violations (2)</div>
        <div className="flex h-[42px] w-[262px] items-center justify-center border-t border-r border-[#e4e4e4] bg-[#f3f3f3] pt-0.5 pr-1">Unconnected Items (0)</div>
        <div className="flex h-[42px] w-[297px] items-center justify-center border-t border-r border-[#e4e4e4] bg-[#f3f3f3] pt-0.5">Schematic Parity (not run)</div>
        <div className="flex h-[42px] w-[198px] items-center justify-center border-t border-r border-[#e4e4e4] bg-[#f3f3f3] pt-0.5">Ignored Tests (4)</div>
      </div>
      <div className="ml-[9px] h-[380px] w-[986px] shrink-0 border border-t-0 border-[#e6e6e6] bg-[#f9f9f9] pt-2 pl-3">
        <div className="flex h-[352px] w-[962px] flex-col overflow-hidden border border-[#8f8f8f] bg-white pt-[2px]">
          <Row open>
            <span className="tracking-[0.27px]">Warning: Footprint 'SOIC-8_5.23x5.23mm_P1.27mm' does not match copy in libra</span>
          </Row>
          <Row>Footprint U1</Row>
          <Row open>
            <span className="tracking-[-0.03px]">Warning: Text height out of range (board setup constraints silk text height min h</span>
          </Row>
          <Row>
            <span>PCB Text '</span>
            <span className="pl-[28px] tracking-[-0.1px]">ICSP MISO | Vcc SCK  | MOSI RE...' on F.Silkscreen</span>
          </Row>
          <div className="mt-auto flex h-[33px] shrink-0 items-center bg-[#f0f0f0] pl-[35px]">
            <div className="h-[19px] w-[598px] bg-[#858585]" />
          </div>
        </div>
      </div>
      <div className="mt-[8px] flex h-[42px] shrink-0 items-center pl-[14px]">
        <span className="w-[73px]">Show:</span>
        <Check />
        <span className="w-[92px] pl-[6px]">All</span>
        <Check on />
        <span className="w-[85px] pl-[6px]">Errors</span>
        <span className="flex h-[31px] w-10 items-center justify-center rounded-[50%] bg-[#008000] font-['Liberation_Sans'] text-[26px] font-bold text-white">0</span>
        <span className="w-[46px]" />
        <Check on />
        <span className="w-[125px] pl-[6px]">Warnings</span>
        <span className="flex h-[31px] w-10 items-center justify-center rounded-[50%] bg-[#ffff00] font-['Liberation_Sans'] text-[26px] font-bold">2</span>
        <span className="w-[46px]" />
        <Check />
        <span className="pl-[6px]">Exclusions</span>
        <Btn className="mr-[15px] ml-auto w-[120px] border-[#d0d0d0]">Save...</Btn>
      </div>
      <div className="mt-[12px] flex h-[42px] shrink-0 items-center pl-[15px]">
        <Btn className="w-[191px] border-[#d0d0d0]">Delete Marker</Btn>
        <Btn className="ml-[13px] w-[235px] border-[#d0d0d0] tracking-[0.05px]">Delete All Markers</Btn>
        <Btn className="mr-[17px] ml-auto w-[145px] border-[#d0d0d0]">Run DRC</Btn>
        <Btn className="mr-[12px] w-[145px] border-[#0078d4]">Close</Btn>
      </div>
      <svg viewBox="0 0 16 16" className="absolute right-1 bottom-1 size-4">
        <path d="M11 0 h4 v4 h-4 Z M11 6 h4 v4 h-4 Z M11 12 h4 v4 h-4 Z M5 6 h4 v4 h-4 Z M5 12 h4 v4 h-4 Z M0 12 h3 v4 h-3 Z" fill="#c4c4c4" />
      </svg>
    </div>
  );
}

/* ---------- right panel ---------- */

function Eye() {
  return (
    <svg viewBox="0 0 32 32" className="size-8 shrink-0">
      <circle cx="16" cy="16" r="16" fill={D} />
      <path d="M3 16 Q16 3 29 16 Q16 29 3 16 Z" fill="#f1f1f1" />
      <circle cx="16" cy="16" r="4" fill="#f1f1f1" stroke={D} strokeWidth="2" />
    </svg>
  );
}

function Swatch({ a, b }: { a: string; b?: string }) {
  return (
    <svg viewBox="0 0 26 24" className="h-6 w-[26px] shrink-0">
      <rect width="26" height="24" fill={a} />
      {b && <path d="M10 0 h10 v12 h-10 Z M0 12 h10 v12 h-10 Z M20 12 h6 v12 h-6 Z" fill={b} />}
    </svg>
  );
}

const filters: [string, boolean][][] = [
  [["All items", true], ["Footprints", true], ["Tracks", true], ["Pads", true], ["Zones", true], ["Dimensions", true]],
  [["Locked items", false], ["Text", true], ["Vias", true], ["Graphics", true], ["Rule Areas", true], ["Other items", true]],
];

function SidePanel() {
  return (
    <div className="flex w-[356px] shrink-0 flex-col bg-[#f0f0f0]">
      <div className="flex h-[42px] shrink-0 items-center bg-[#bababa] pl-[6px] tracking-[-0.4px]">Appearance</div>
      <div className="flex h-[51px] shrink-0 items-end pl-px">
        <div className="flex h-[46px] w-[108px] items-center border border-b-0 border-[#e4e4e4] bg-[#f9f9f9] pl-[13px] text-[22px]">Layers</div>
        <div className="flex h-[43px] w-[101px] items-center border-t border-r border-[#e4e4e4] bg-[#f3f3f3] pt-1 pl-2 text-[22px] tracking-[0.2px]">Objects</div>
        <div className="flex h-[43px] w-[99px] items-center border-t border-r border-[#e4e4e4] bg-[#f3f3f3] pt-1 pl-[12px] text-[22px]">Nets</div>
      </div>
      <div className="flex h-[866px] shrink-0 flex-col border-b border-l border-[#e2e2e2] bg-[#f9f9f9]">
        <div className="mt-[3px] ml-[7px] flex h-[813px] shrink-0">
          <div className="flex w-[310px] flex-col overflow-hidden bg-[#f1f1f1] pt-px">
            {layers.map(([name, a, b]) => (
              <div
                key={name}
                className={clsx(
                  "flex h-[34px] shrink-0 items-center pl-1 text-[20px] tracking-[-0.3px]",
                  name === "F.Silkscreen" && "bg-[#e2e2e2]",
                )}
              >
                <span className={clsx("mr-[5px] h-[10px] w-[7px] rounded-r-[3px]", name === "F.Silkscreen" && "bg-[#4040ff]")} />
                <Swatch a={a} b={b} />
                <span className="w-[6px] shrink-0" />
                <Eye />
                <span className="pl-[5px]">{name}</span>
              </div>
            ))}
          </div>
          <div className="ml-px w-[33px] bg-[#f1f1f1] pt-[34px] pl-[7px]">
            <div className="h-[567px] w-[19px] bg-[#858585]" />
          </div>
        </div>
        <div className="mt-[5px] ml-3 flex h-[37px] w-[334px] items-center gap-[6px] bg-white pb-1 pl-[15px] text-[20px] tracking-[-0.1px] text-[#7b7b7b]">
          <span className="h-4 w-2 bg-[#555] [clip-path:polygon(0_0,100%_50%,0_100%)]" />
          Layer Display Options
        </div>
      </div>
      <div className="mt-[15px] flex h-[28px] shrink-0 items-center pl-[7px] text-[20px] tracking-[-0.3px]">Presets (Ctrl+Tab):</div>
      <Combo className="mt-[3px] ml-[7px] w-[345px]">All Layers</Combo>
      <div className="mt-[6px] flex h-[28px] shrink-0 items-center pl-[7px] text-[20px] tracking-[-0.3px]">Viewports (Shift+Tab):</div>
      <Combo className="mt-[3px] ml-[7px] w-[345px]">---</Combo>
      <div className="mt-[5px] h-2 shrink-0 bg-[#dadada]" />
      <div className="flex h-[42px] shrink-0 items-center bg-[#bababa] pl-[6px] tracking-[0.1px]">Selection Filter</div>
      <div className="mt-2 ml-[5px] flex text-[20px] tracking-[-0.2px]">
        {filters.map((col, i) => (
          <div key={i} className="flex w-[162px] flex-col gap-[6px]">
            {col.map(([t, on]) => (
              <div key={t} className="flex h-[26px] items-center gap-[6px] whitespace-nowrap">
                <Check on={on} />
                {t}
              </div>
            ))}
          </div>
        ))}
      </div>
    </div>
  );
}

const status: [string, string][] = [
  ["w-[752px] pl-[3px]", "Session file imported and merged OK."],
  ["w-[152px]", "Z 3.49"],
  ["w-[327px]", "X 84.4500  Y 85.7750"],
  ["w-[519px]", "dx 84.4500  dy 85.7750  dist 120.3709"],
  ["w-[377px]", "grid 0.0250"],
  ["w-[123px]", "mm"],
  ["w-[339px]", ""],
];

export default function App() {
  return (
    <div className="relative flex h-[1708px] w-[2876px] flex-col overflow-hidden bg-[#f0f0f0] font-['Open_Sans',sans-serif] text-[23px] leading-none tracking-[-0.15px] text-black">
      {/* title bar */}
      <div className="flex h-[45px] shrink-0 items-center bg-[#f3f3f3] pl-0.5 text-[#8a8a8a]">
        <svg viewBox="2 2 44 44" className="size-8 rounded">
          {boardArt}
        </svg>
        <span className="pt-0.5 pl-[6px] tracking-[-0.05px]">*MCU_datalogger_PCB — PCB Editor</span>
        <svg viewBox="0 0 210 22" className="mr-[35px] ml-auto h-[22px] w-[210px]">
          <path d="M6 11 H26" stroke="#777" strokeWidth="1.500" />
          <rect x="97" y="5" width="14" height="14" rx="2" fill="none" stroke="#777" strokeWidth="1.500" />
          <path d="M101 2 H112 Q114 2 114 4 V15" fill="none" stroke="#777" strokeWidth="1.500" />
          <path d="M190 1 L209 20 M209 1 L190 20" stroke="#777" strokeWidth="1.500" />
        </svg>
      </div>
      {/* menu bar */}
      <div className="flex h-[37px] shrink-0 items-center gap-[29.400px] bg-white pt-1 pl-[14px] tracking-[-0.4px] text-[#6d6d6d]">
        {["File", "Edit", "View", "Place", "Route", "Inspect", "Tools", "Preferences", "Help"].map((m) => (
          <span key={m}>{m}</span>
        ))}
      </div>
      {/* main toolbar */}
      <div className="flex h-[72px] shrink-0 items-center bg-[#efefef] pl-2">
        {topTools.map((t, i) =>
          t === null ? (
            <div key={i} className="flex h-14 w-2.5 shrink-0 justify-center">
              <div className="h-full w-px bg-[#8a8a8a]" />
            </div>
          ) : (
            <div key={i} className="flex w-16 shrink-0 justify-center">
              <Glyph name={t} />
            </div>
          ),
        )}
      </div>
      {/* settings bar */}
      <div className="flex h-[67px] shrink-0 items-center bg-[#efefef] pb-[3px] pl-[10px]">
        <Combo className="w-[500px] tracking-[-0.7px]">Track: us</Combo>
        <Combo className="ml-[10px] w-[847px] pl-[579px]">0 mm (0.98 mils)</Combo>
        <div className="mx-[7px] h-14 w-px bg-[#8a8a8a]" />
        <Combo className="w-[184px] tracking-[0.05px]">Zoom 3.50</Combo>
      </div>
      {/* work area */}
      <div className="flex h-[1379px] shrink-0">
        <VToolbar tools={leftTools} className="w-[68px]" />
        <div className="h-full w-[2376px] shrink-0 border border-[#9a9a9a] bg-[#000f20]">
          <Canvas />
        </div>
        <VToolbar tools={rightTools} className="w-[68px]" />
        <div className="w-2 shrink-0 bg-[#dadada]" />
        <SidePanel />
      </div>
      {/* board info */}
      <div className="flex h-[64px] shrink-0 pl-[22px] tracking-[-0.2px] text-[#7a7a7a]">
        {[
          ["w-[113px]", "Pads", "117"],
          ["w-[107px]", "Vias", "0"],
          ["w-[233px]", "Track Segments", "0"],
          ["w-[113px]", "Nets", "35"],
          ["w-[130px]", "Unrouted", "78"],
        ].map(([w, a, b]) => (
          <div key={a} className={clsx("flex flex-col pt-[2px]", w)}>
            <span className="flex h-8 items-center">{a}</span>
            <span className="flex h-8 items-center">{b}</span>
          </div>
        ))}
      </div>
      {/* status bar */}
      <div className="flex h-[41px] shrink-0 items-center border-t border-[#d4d4d4] pt-0.5 tracking-[-0.1px]">
        {status.map(([w, t], i) => (
          <div key={i} className={clsx("flex h-[36px] items-center border-r border-[#d4d4d4] pl-1 whitespace-pre", w)}>
            {t}
          </div>
        ))}
      </div>
      <div className="h-1 shrink-0 bg-[#2b2d2e]" />
      <Dialog />
    </div>
  );
}
